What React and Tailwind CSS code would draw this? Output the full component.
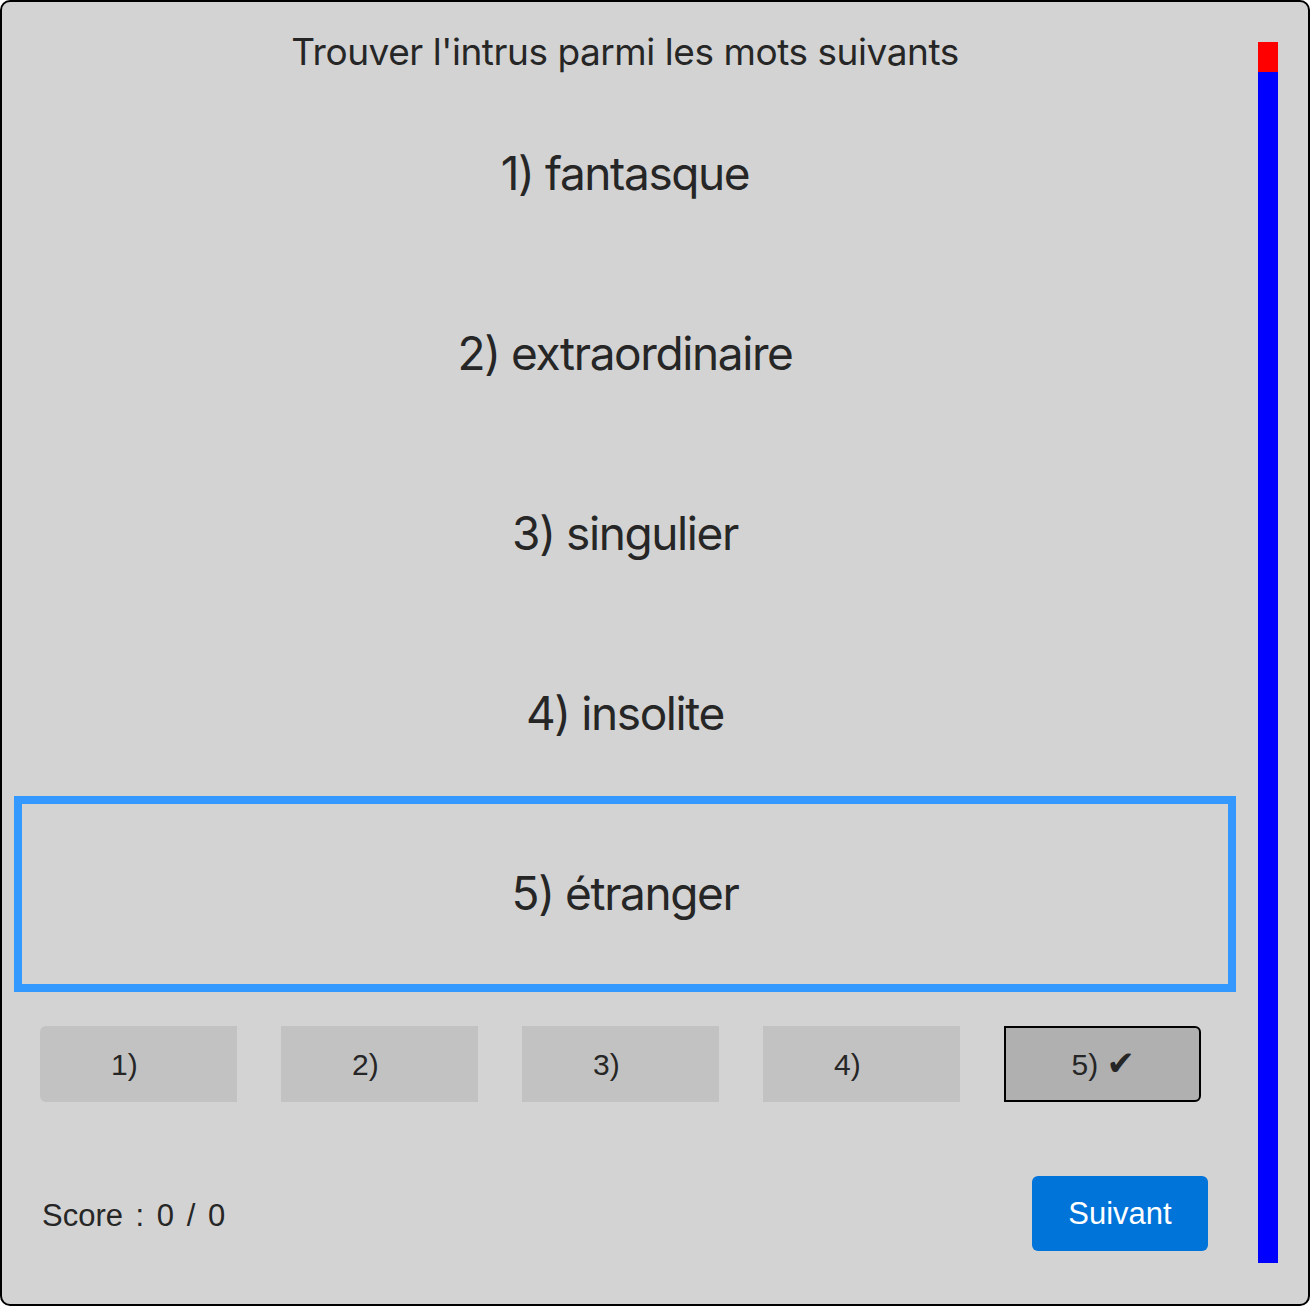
import { useState } from "react";

const words = ["fantasque", "extraordinaire", "singulier", "insolite", "étranger"];

export default function App() {
	const [selected, setSelected] = useState(4);
	const score = 0;
	const total = 0;

	return (
		<div className="w-[1310px] h-[1306px] flex bg-[#d3d3d3] border-2 border-black rounded-[10px] text-[#262626] overflow-hidden">
			<div className="ml-[12px] w-[1222px] flex flex-col">
				<div className="h-[82px] pt-[17px] flex items-center justify-center font-['Inter',sans-serif] text-[37px] tracking-[-0.45px]">
					Trouver l'intrus parmi les mots suivants
				</div>
				<div className="px-2 flex flex-col">
					{words.map((word, i) => (
						<div
							key={word}
							onClick={() => setSelected(i)}
							className={
								"h-[180px] pb-[2px] flex items-center justify-center font-['Inter',sans-serif] text-[46px] tracking-[-1.4px] " +
								(selected === i ? "outline-8 outline-solid outline-[#3399ff]" : "")
							}
						>
							{i + 1}) {word}
						</div>
					))}
				</div>
				<div className="mt-[42px] pl-[26px] flex gap-[44px] font-['Liberation_Sans',Arial,sans-serif] text-[30px]">
					{words.map((word, i) => {
						const active = selected === i;
						let cls = "w-[197px] h-[76px] flex items-center justify-center ";
						if (i === 0) cls += "rounded-l-md ";
						if (i === words.length - 1) cls += "rounded-r-md ";
						cls += active ? "bg-[#b0b0b0] border-2 border-black" : "bg-[#c2c2c2]";
						return (
							<button key={word} onClick={() => setSelected(i)} className={cls}>
								<span>
									{i + 1}){" "}
									{active ? (
										<span className="inline-block w-[27px] font-['DejaVu_Sans',sans-serif] text-[34px] leading-none">✔</span>
									) : (
										<span className="inline-block w-[20px]" />
									)}
								</span>
							</button>
						);
					})}
				</div>
				<div className="mt-[74px] pl-[28px] pr-[28px] flex items-center justify-between font-['Liberation_Sans',Arial,sans-serif]">
					<span className="mt-[5px] text-[31px] [word-spacing:4px]">
						Score : {score} / {total}
					</span>
					<button className="w-[176px] h-[75px] pt-[2px] rounded-md bg-[#0074d9] text-white text-[31px]">Suivant</button>
				</div>
			</div>
			<div className="ml-[22px] mt-[40px] w-[20px] h-[1221px] flex flex-col">
				<div className="h-[30px] bg-[#ff0000]" />
				<div className="flex-1 bg-[#0000ff]" />
			</div>
		</div>
	);
}
